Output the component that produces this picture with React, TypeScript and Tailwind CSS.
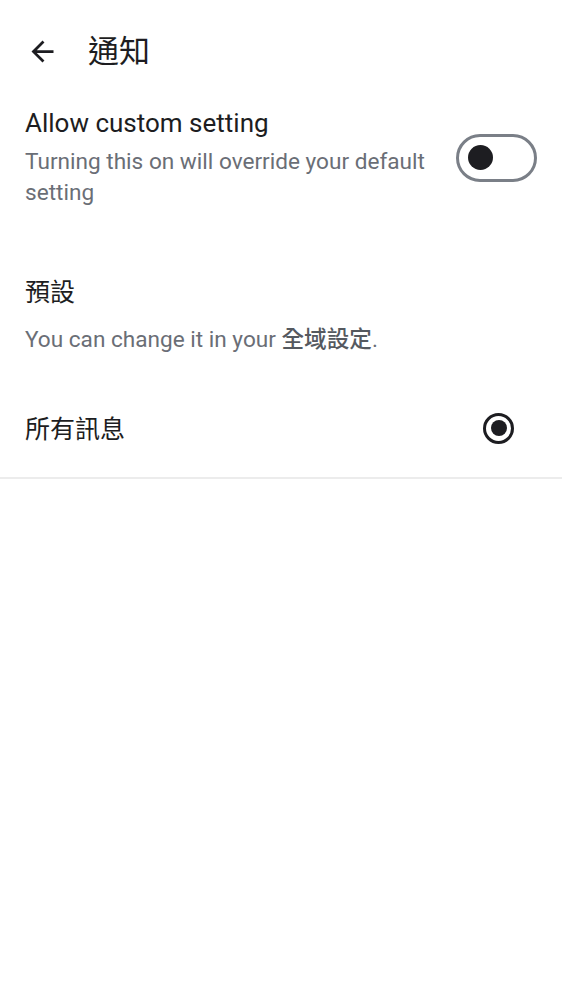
import React from "react";

export default function App() {
  return (
    <div className="min-h-screen bg-white text-[#1d1d21] font-['Roboto','Noto_Sans_CJK_TC',sans-serif]">
      <header className="flex items-center h-[102px] pl-[26px]">
        <svg width="33" height="33" viewBox="0 0 24 24" fill="#1d1d21">
          <path d="M20 11H7.83l5.59-5.59L12 4l-8 8 8 8 1.41-1.41L7.83 13H20v-2z" />
        </svg>
        <h1 className="ml-[29px] text-[31px] leading-none">通知</h1>
      </header>

      <div className="flex items-center justify-between pl-[25px] pr-[25px] pt-[5px]">
        <div className="flex-1 pr-6">
          <div className="text-[26px] leading-[32px]">Allow custom setting</div>
          <div className="text-[22.6px] leading-[31px] text-[#6a6e76] mt-[7px]">
            Turning this on will override your default setting
          </div>
        </div>
        <button className="w-[81px] h-[48px] shrink-0 rounded-full border-[3px] border-[#7a7f87] flex items-center pl-[9px]">
          <span className="w-[25px] h-[25px] rounded-full bg-[#1d1d21]" />
        </button>
      </div>

      <div className="pl-[25px] pr-[25px] pt-[69px]">
        <div className="text-[25px] leading-[32px]">預設</div>
        <div className="text-[22.6px] leading-[31px] text-[#6a6e76] mt-[15px]">
          You can change it in your <span className="font-medium text-[#55595f]">全域設定</span>.
        </div>
      </div>

      <div className="flex items-center justify-between pl-[25px] pr-[48px] h-[76px] mt-[35px]">
        <div className="text-[25px] leading-[32px] mt-[3px]">所有訊息</div>
        <span className="w-[31px] h-[31px] rounded-full border-[3px] border-[#1d1d21] flex items-center justify-center">
          <span className="w-[16px] h-[16px] rounded-full bg-[#1d1d21]" />
        </span>
      </div>
      <div className="h-[2px] bg-[#ececec] mt-[11px]" />
    </div>
  );
}
